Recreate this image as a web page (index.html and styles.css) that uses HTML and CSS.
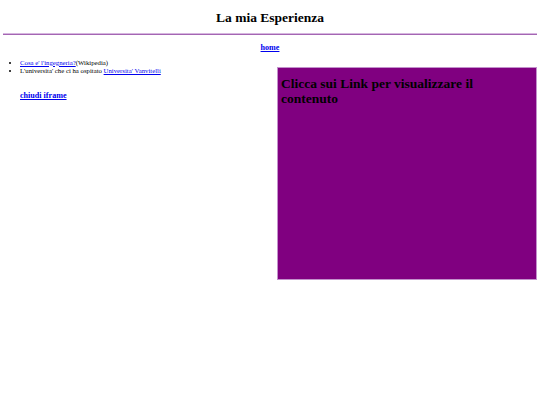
FILE: index.html
```html
<!DOCTYPE html>
<html lang="it">
<head>
<meta charset="utf-8">
<title>La mia Esperienza</title>
<link rel="stylesheet" href="styles.css">
</head>
<body>
<h1 class="title">La mia Esperienza</h1>
<hr class="rule">
<p class="home"><a href="#">home</a></p>
<div class="content">
  <div class="left">
    <ul class="links">
      <li><a href="#">Cosa e' l'ingegneria?</a>(Wikipedia)</li>
      <li>L'universita' che ci ha ospitato <a href="#">Universita' Vanvitelli</a></li>
    </ul>
    <p class="close"><a href="#">chiudi iframe</a></p>
  </div>
  <div class="frame">
    <h2 class="frame-title">Clicca sui Link per visualizzare il contenuto</h2>
  </div>
</div>
</body>
</html>
```

FILE: styles.css
```css
html, body {
  background: #ffffff;
}
body {
  margin: 0;
  padding: 0 3px;
  font-family: "Liberation Serif", "Times New Roman", serif;
  color: #000;
}
a {
  color: #0000ee;
}
.title {
  font-size: 13.5px;
  font-weight: bold;
  text-align: center;
  margin: 10px 0 0;
  line-height: 15.5px;
}
.rule {
  height: 0;
  margin: 7px 0 0;
  border: none;
  border-top: 1px solid #d6b6df;
  border-bottom: 1px solid #a466b3;
}
.home {
  margin: 8px 0 0;
  text-align: center;
  font-size: 8.1px;
  font-weight: bold;
  line-height: 9.3px;
}
.content {
  display: flex;
  justify-content: space-between;
  align-items: flex-start;
}
.left {
  display: flex;
  flex-direction: column;
}
.links {
  margin: 7px 0 0;
  padding-left: 17px;
  font-size: 6.75px;
  line-height: 7.8px;
}
.close {
  margin: 17px 0 0 17px;
  font-size: 8.1px;
  font-weight: bold;
  line-height: 9.3px;
}
.frame {
  margin-top: 15px;
  width: 258px;
  height: 211px;
  background: #800080;
  border: 1px solid #c391cc;
}
.frame-title {
  margin: 0;
  padding: 8px 3px 0;
  font-size: 13.5px;
  line-height: 15.5px;
  font-weight: bold;
  color: #000;
}
```
